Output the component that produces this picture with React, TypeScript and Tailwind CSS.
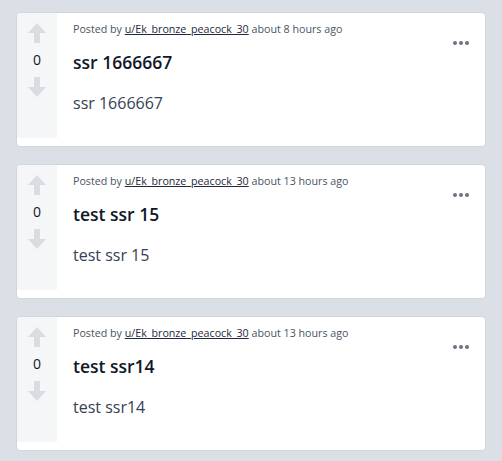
import React from 'react';

type Post = {
	id: number;
	author: string;
	time: string;
	title: string;
	body: string;
};

const posts: Post[] = [
	{ id: 1, author: 'u/Ek_bronze_peacock_30', time: 'about 8 hours ago', title: 'ssr 1666667', body: 'ssr 1666667' },
	{ id: 2, author: 'u/Ek_bronze_peacock_30', time: 'about 13 hours ago', title: 'test ssr 15', body: 'test ssr 15' },
	{ id: 3, author: 'u/Ek_bronze_peacock_30', time: 'about 13 hours ago', title: 'test ssr14', body: 'test ssr14' },
];

const Arrow = ({ down }: { down?: boolean }) => (
	<svg width="18" height="20" viewBox="0 0 18 20" className={down ? 'rotate-180' : ''}>
		<polygon points="9,0 18,10 12,10 12,20 6,20 6,10 0,10" fill="#d9dde2" />
	</svg>
);

const PostCard = ({ post }: { post: Post }) => {
	return (
		<div className="flex h-[135px] w-full rounded border border-gray-300 bg-white pb-2">
			<div className="flex w-10 flex-col items-center gap-[7px] rounded-tl bg-[#f5f6f8] pt-[10px]">
				<Arrow />
				<span className="text-sm text-gray-900">0</span>
				<Arrow down />
			</div>
			<div className="flex flex-1 flex-col px-4 pt-2">
				<p className="text-[10.7px] leading-4 text-gray-600">
					Posted by{' '}
					<span className="text-gray-800 underline">{post.author}</span>{' '}
					{post.time}
				</p>
				<div className="flex items-start justify-between">
					<h2 className="mt-[12px] text-[17.5px] font-semibold text-gray-900">{post.title}</h2>
					<div className="mt-1 flex gap-[2px]">
						<span className="h-1 w-1 rounded-full bg-gray-500" />
						<span className="h-1 w-1 rounded-full bg-gray-500" />
						<span className="h-1 w-1 rounded-full bg-gray-500" />
					</div>
				</div>
				<p className="mt-4 text-base text-gray-700">{post.body}</p>
			</div>
		</div>
	);
};

export default function App() {
	return (
		<div
			className="flex min-h-[461px] flex-col gap-[17px] bg-[#dae0e6] px-4 pt-3"
			style={{ fontFamily: '"Open Sans", sans-serif' }}
		>
			{posts.map((post) => (
				<PostCard key={post.id} post={post} />
			))}
		</div>
	);
}
